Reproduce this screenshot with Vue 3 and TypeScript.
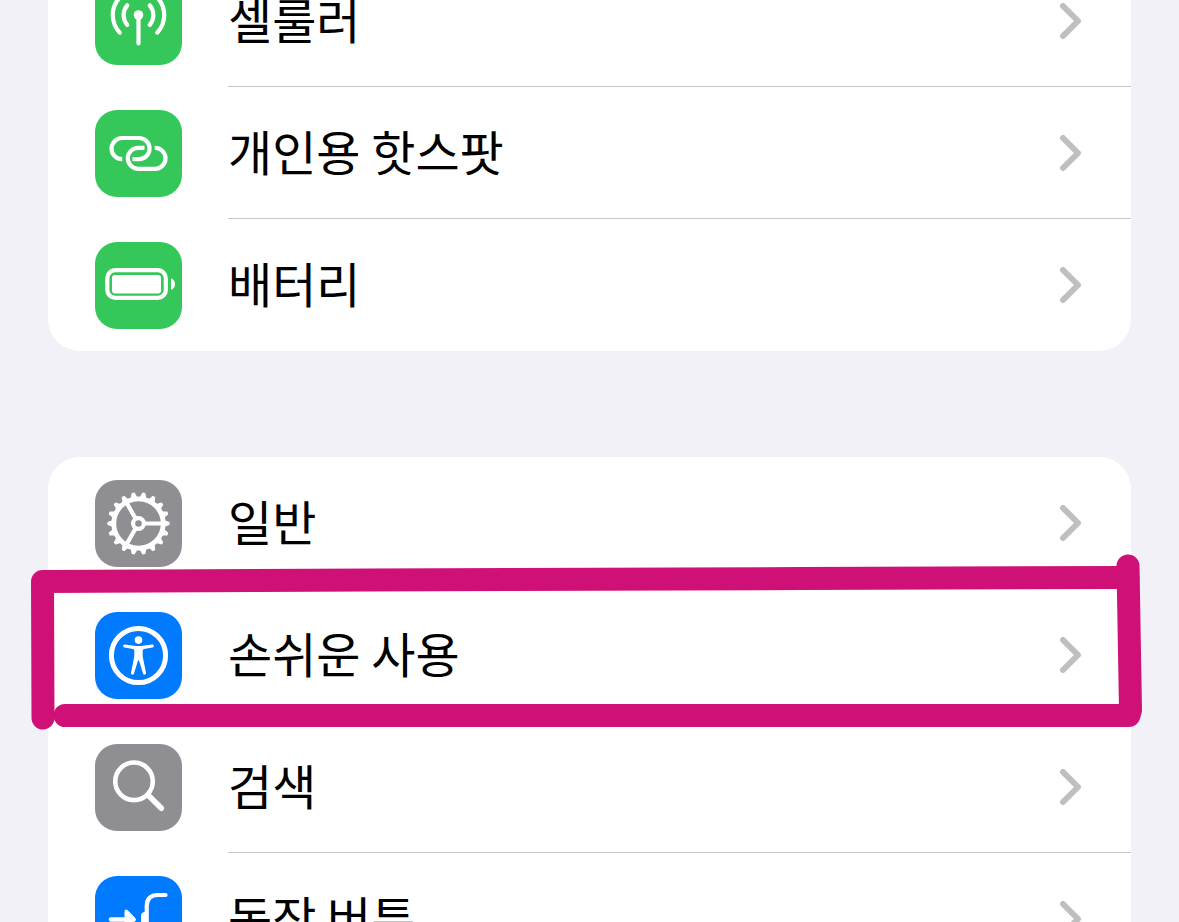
<script setup lang="ts">
type IconName = 'cellular' | 'hotspot' | 'battery' | 'general' | 'accessibility' | 'search' | 'action'

interface Item {
  icon: IconName
  label: string
  tone: 'green' | 'gray' | 'blue'
  marked?: boolean
}

const groups: Item[][] = [
  [
    { icon: 'cellular', label: '셀룰러', tone: 'green' },
    { icon: 'hotspot', label: '개인용 핫스팟', tone: 'green' },
    { icon: 'battery', label: '배터리', tone: 'green' },
  ],
  [
    { icon: 'general', label: '일반', tone: 'gray' },
    { icon: 'accessibility', label: '손쉬운 사용', tone: 'blue', marked: true },
    { icon: 'search', label: '검색', tone: 'gray' },
    { icon: 'action', label: '동작 버튼', tone: 'blue' },
  ],
]

const teeth: number[] = Array.from({ length: 18 }, (_, i) => i * 20)
const spokes: number[] = [0, 120, 240]
</script>

<template>
  <main class="settings">
    <ul v-for="(group, g) in groups" :key="g" class="group">
      <li v-for="item in group" :key="item.icon" class="item" :class="{ marked: item.marked }">
        <a class="row" :href="'#' + item.icon">
          <svg class="tile" :class="item.tone" viewBox="0 0 87 87" aria-hidden="true">
            <g v-if="item.icon === 'cellular'" class="line">
              <circle class="solid" cx="43.5" cy="37" r="4.8" />
              <path d="M43.5 37V65.5M32.2 27.3A15.2 15.2 0 0 0 32.2 46.9M54.8 27.3A15.2 15.2 0 0 1 54.8 46.9M24.7 19.6A25.5 25.5 0 0 0 24.7 54.6M62.3 19.6A25.5 25.5 0 0 1 62.3 54.6" />
            </g>
            <g v-else-if="item.icon === 'hotspot'" class="line butt">
              <path d="M27.3 49.2A10.6 10.6 0 0 1 27 28H44A10.6 10.6 0 0 1 44 49.2H37.5" />
              <path d="M59.7 37.8A10.5 10.5 0 0 1 60.3 58.8H43.3A10.5 10.5 0 0 1 43.3 37.8H49.5" />
            </g>
            <g v-else-if="item.icon === 'battery'" class="line">
              <rect x="12.3" y="28.2" width="58.5" height="27.7" rx="8" />
              <rect class="solid" x="17" y="33" width="49" height="18.5" rx="3" />
              <path class="solid" d="M76 36.2C81.3 38 81.3 46.2 76 48Z" />
            </g>
            <g v-else-if="item.icon === 'general'" class="line">
              <circle cx="43.5" cy="43.5" r="24.7" stroke-width="4.8" />
              <circle cx="43.5" cy="43.5" r="5.4" />
              <path v-for="t in teeth" :key="'t' + t" class="tooth" :transform="`rotate(${t} 43.5 43.5)`" d="M69 40.5L74.2 42.4V44.6L69 46.5Z" />
              <path v-for="s in spokes" :key="'s' + s" :transform="`rotate(${s} 43.5 43.5)`" d="M50.5 43.5H68" />
            </g>
            <g v-else-if="item.icon === 'accessibility'" class="line">
              <circle cx="43.5" cy="43.5" r="27.1" stroke-width="5" />
              <circle class="solid" cx="43.5" cy="28.1" r="3.8" />
              <path class="solid" d="M29.9 32.5L39 33.7Q43.5 34.3 48 33.7L57.1 32.5A1.5 1.5 0 0 1 57.5 35.5L49 37Q47.7 37.3 47.7 38.5V44.5L51 60.7A1.5 1.5 0 0 1 48 61.5L44.3 49.4Q43.5 47 42.7 49.4L39 61.5A1.5 1.5 0 0 1 36 60.7L39.3 44.5V38.5Q39.3 37.3 38 37L29.500 35.500A1.5 1.5 0 0 1 29.9 32.5Z" />
            </g>
            <g v-else-if="item.icon === 'search'" class="line">
              <circle cx="39" cy="37.3" r="18.8" stroke-width="4.6" />
              <path stroke-width="5.6" d="M53.500 51.5L66.3 64.3" />
            </g>
            <g v-else class="line">
              <path d="M70.5 19H63Q51.7 19 51.7 30.5V87" />
              <path class="solid" d="M50 36Q46 36 46 40V58Q46 62 50 62Z" />
              <path stroke-width="4.4" d="M16 43.500H34" />
              <path class="solid" d="M29.5 36Q29.5 32 33 34.4L40 41.7Q42 43.5 40 45.3L33 52.6Q29.5 55 29.5 51Z" />
            </g>
          </svg>
          <span class="label">{{ item.label }}</span>
          <svg class="chevron" viewBox="0 0 24 38" aria-hidden="true">
            <path d="M4 3L19 18L4 33" />
          </svg>
        </a>
        <svg v-if="item.marked" class="marker" viewBox="0 0 1179 190" preserveAspectRatio="none" aria-hidden="true">
          <path d="M43 168L42.500 31.500L370 30L800 28.500L1128 27.500" />
          <path d="M1128 16L1130.500 160L1129 165.500H65" />
        </svg>
      </li>
    </ul>
  </main>
</template>

<style>
body {
  margin: 0;
  background: #f2f1f7;
}
</style>

<style scoped>
.settings {
  box-sizing: border-box;
  height: 100vh;
  overflow: hidden;
  padding: 0 48px;
  background: #f2f1f7;
  font-family: "Noto Sans CJK KR", sans-serif;
}

.group {
  margin: 0 0 106px;
  padding: 0;
  list-style: none;
  background: #fff;
  border-radius: 32px;
}

/* The list is scrolled part of the way through its first row. */
.group:first-child {
  margin-top: -45px;
}

.item {
  position: relative;
}

.item:not(:last-child, .marked)::after {
  content: "";
  position: absolute;
  right: 0;
  bottom: 0;
  left: 180px;
  height: 1px;
  background: #c6c6c8;
}

.marked {
  z-index: 1;
}

.row {
  display: flex;
  align-items: center;
  padding: 23px 48px 22px 47px;
  color: #000;
  text-decoration: none;
}

.tile {
  flex: none;
  width: 87px;
  height: 87px;
  border-radius: 22px;
}

.green {
  background: #35c759;
}

.gray {
  background: #8e8e93;
}

.blue {
  background: #007aff;
}

.line {
  fill: none;
  stroke: #fff;
  stroke-width: 4.2;
  stroke-linecap: round;
  stroke-linejoin: round;
}

.butt {
  stroke-linecap: butt;
}

.solid {
  fill: #fff;
  stroke: none;
}

.tooth {
  fill: #fff;
  stroke-width: 1;
}

.label {
  flex: 1;
  margin-left: 46px;
  padding-bottom: 8px;
  font-size: 48px;
  line-height: 72px;
}

.chevron {
  flex: none;
  width: 24px;
  height: 38px;
  fill: none;
  stroke: #bfbfbf;
  stroke-width: 6;
  stroke-linecap: round;
  stroke-linejoin: round;
}

.marker {
  position: absolute;
  top: -39px;
  left: -48px;
  width: calc(100% + 96px);
  height: 190px;
  fill: none;
  stroke: #cf1177;
  stroke-width: 23;
  stroke-linecap: round;
  stroke-linejoin: round;
  pointer-events: none;
}
</style>
